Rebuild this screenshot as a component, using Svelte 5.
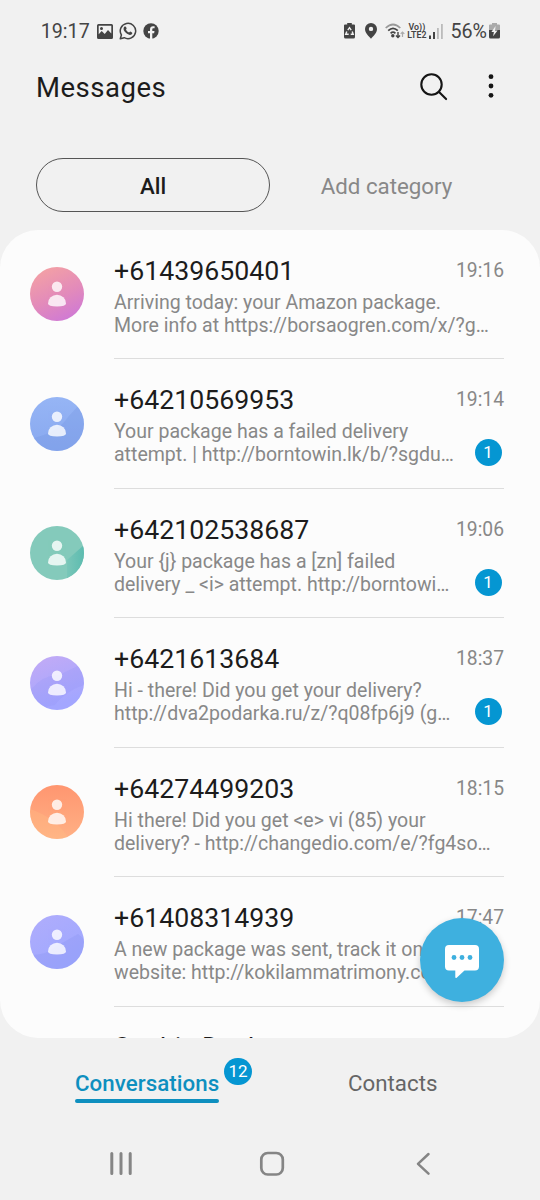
<script>
  const rows = [
    { name: '+61439650401', time: '19:16', lines: ['Arriving today: your Amazon package.', 'More info at https://borsaogren.com/x/?g…'], tone: 'pink' },
    { name: '+64210569953', time: '19:14', lines: ['Your package has a failed delivery', 'attempt. | http://borntowin.lk/b/?sgdu…'], tone: 'blue', unread: 1 },
    { name: '+642102538687', time: '19:06', lines: ['Your {j} package has a [zn] failed', 'delivery _ <i> attempt. http://borntowi…'], tone: 'green', unread: 1 },
    { name: '+6421613684', time: '18:37', lines: ['Hi - there! Did you get your delivery?', 'http://dva2podarka.ru/z/?q08fp6j9 (g…'], tone: 'violet', unread: 1 },
    { name: '+64274499203', time: '18:15', lines: ['Hi there! Did you get <e> vi (85) your', 'delivery? - http://changedio.com/e/?fg4so…'], tone: 'orange' },
    { name: '+61408314939', time: '17:47', lines: ['A new package was sent, track it on our', 'website: http://kokilammatrimony.com/…'], tone: 'indigo' }
  ];
</script>

<div class="phone">
  <header class="status">
    <div class="left">
      <span>19:17</span>
      <svg class="pic" width="16" height="15" viewBox="0 0 16 15"><path fill="#444" fill-rule="evenodd" d="M1.5 0h13A1.5 1.5 0 0 1 16 1.500v12a1.500 1.500 0 0 1-1.500 1.500h-13A1.500 1.500 0 0 1 0 13.500v-12A1.500 1.500 0 0 1 1.500 0ZM1.700 1.800v8.400l3-3.200 3 3 3.300-4 3.300 3.500V1.800ZM4.500 3a1.500 1.500 0 1 1 0 3a1.500 1.500 0 0 1 0-3Z"/></svg>
      <svg class="wa" width="18" height="18" viewBox="0 0 18 18"><path d="M1.300 16.800 2.400 13A7.700 7.700 0 1 1 5.200 15.700Z" fill="none" stroke="#444" stroke-width="1.500" stroke-linejoin="round"/><path d="M5.700 4.600c.6-.4 1.100-.2 1.400.5l.5 1.300c.1.500-.6 1-.6 1.300.7 1.300 1.700 2.200 3 2.700.4.100.9-.9 1.400-.8l1.600.8c.7.500 0 1.800-.6 2.200-1.400.9-3.600 0-5.300-1.500C5.300 9.500 4 7.200 4.700 5.700c.2-.5.600-.9 1-1.100Z" fill="#444"/></svg>
      <svg class="fb" width="16" height="16" viewBox="0 0 16 16"><circle cx="8" cy="8" r="7.700" fill="#444"/><path d="M7 16v-5.700H5V8h2V6.400C7 4.200 8.200 3.200 10 3.200l1.600.1v2h-1c-1 0-1.300.5-1.300 1.200V8h2.200l-.4 2.300H9.300V16Z" fill="#f1f1f1"/></svg>
    </div>
    <div class="right">
      <svg class="recycle" width="11" height="16" viewBox="0 0 11 16"><path d="M3.200 0h4.600v1.600H10q1 0 1 1V14q0 1.500-1.500 1.500h-8Q0 15.500 0 14V2.600q0-1 1-1h2.200Z" fill="#444"/><path d="m3.800 7.200 1.700-2.500 1.700 2.500M8.200 8.500l1 2.800H6.700M4.700 11.300h-3l1.100-2.800" fill="none" stroke="#f1f1f1" stroke-width="1.400"/></svg>
      <svg class="pin" width="12" height="16" viewBox="0 0 12 16"><path fill="#444" fill-rule="evenodd" d="M6 0a6 6 0 0 1 6 6c0 4-4 7.500-6 9.700C4 13.500 0 10 0 6a6 6 0 0 1 6-6Zm0 3.700a2.200 2.200 0 1 0 0 4.400 2.200 2.200 0 0 0 0-4.400Z"/></svg>
      <svg class="wifi" width="20" height="16" viewBox="0 0 20 16"><g fill="none" stroke-width="1.700"><path d="M.7 5Q8 -2 15.300 5" stroke="#999"/><path d="M3.200 7.700Q8 3 12.800 7.700M5.600 10.300Q8 8 10.400 10.300" stroke="#444"/></g><circle cx="7.800" cy="12.800" r="1.700" fill="#444"/><path d="M13 9v5.500m-2-2 2 2 2-2" fill="none" stroke="#444" stroke-width="1.400"/><path d="M17.500 14V9m-1.800 1.900L17.500 9l1.800 1.900" fill="none" stroke="#aaa" stroke-width="1.200"/></svg>
      <span class="lte"><b>Vo))</b><b>LTE2</b></span>
      <svg class="signal" width="14" height="15" viewBox="0 0 14 15"><path d="M0 11.500h2V15H0ZM4 8h2v7H4Z" fill="#444"/><path d="M8 4h1.800v11H8ZM12 0h1.800v15H12Z" fill="#bbb"/></svg>
      <span class="pct">56%</span>
      <svg class="batt" width="11" height="16" viewBox="0 0 11 16"><path d="M3 0h5v1.600h2q1 0 1 1V8H0V2.600q0-1 1-1h2Z" fill="#aaa"/><path d="M0 7h11v7q0 1.500-1.500 1.500h-8Q0 15.500 0 14Z" fill="#444"/><path d="M6.600 3 2.400 9h2.500l-.8 4.300L8.600 7.500H6Z" fill="#f1f1f1"/></svg>
    </div>
  </header>

  <div class="bar">
    <h1>Messages</h1>
    <svg class="search" width="28" height="28" viewBox="0 0 28 28" fill="none" stroke="#151515" stroke-width="2.100" stroke-linecap="round"><circle cx="11.500" cy="11.500" r="10.200"/><path d="m18.800 18.800 7.300 7.300"/></svg>
    <svg class="more" width="6" height="24" viewBox="0 0 6 24" fill="#151515"><circle cx="3" cy="2.700" r="2.400"/><circle cx="3" cy="12" r="2.400"/><circle cx="3" cy="21.300" r="2.400"/></svg>
  </div>

  <div class="cats">
    <button class="all">All</button>
    <button class="add">Add category</button>
  </div>

  <main>
    {#each rows as row}
      <article>
        <div class="avatar {row.tone}">
          <svg width="54" height="54" viewBox="0 0 54 54">
            {#if row.tone === 'blue'}<path d="M38 20 49 8 54 22V54H0V42Q28 36 38 20Z" fill="#7595e0" opacity=".3"/>
            {:else if row.tone === 'green'}<path d="M37 54V34L54 19V54Z" fill="url(#teal)"/><defs><linearGradient id="teal"><stop stop-color="#79c6b8"/><stop offset="1" stop-color="#5dbcb0"/></linearGradient></defs>
            {:else if row.tone === 'violet'}<path d="M0 34Q14 18 29 19L54 7V29Q36 35 25 49L0 54Z" fill="#8d91f5" opacity=".2"/>
            {:else if row.tone === 'orange'}<path d="M0 24Q27 33 39 54H0Z" fill="#ffc184" opacity=".3"/>
            {:else if row.tone === 'indigo'}<path d="M23 54Q31 39 54 34V54ZM0 40Q17 40 25 32L48 19 54 24V54H0Z" fill="#838fee" opacity=".25"/>{/if}
            <g fill="#fff" opacity=".8"><circle cx="27" cy="19.800" r="5.200"/><path d="M18 36.500a9 8.700 0 0 1 18 0q0 2.900-9 2.900t-9-2.900Z"/></g>
          </svg>
        </div>
        <div class="body">
          <div class="top"><h2>{row.name}</h2><time>{row.time}</time></div>
          <p>{row.lines[0]}</p>
          <p>{row.lines[1]}</p>
          {#if row.unread}<span class="badge">{row.unread}</span>{/if}
        </div>
      </article>
    {/each}
    <article class="peek">
      <div class="avatar pink"></div>
      <div class="body"><div class="top"><h2>Sophie Dachsent</h2></div></div>
    </article>
  </main>

  <button class="fab" aria-label="New message">
    <svg width="34" height="34" viewBox="0 0 34 34"><path d="M4 0h26q4 0 4 4v17.500q0 4-4 4H19.500l-7.800 7.200q-1.400.8-1.400-.8v-6.400H4q-4 0-4-4V4q0-4 4-4Z" fill="#fff"/><g fill="#3eb0df"><circle cx="9" cy="12.500" r="2.400"/><circle cx="17" cy="12.500" r="2.400"/><circle cx="25" cy="12.500" r="2.400"/></g></svg>
  </button>

  <nav class="tabs">
    <div class="active"><span>Conversations</span><i>12</i></div>
    <div class="contacts">Contacts</div>
  </nav>

  <footer>
    <svg width="540" height="40" viewBox="0 0 540 40" fill="none" stroke="#858585" stroke-linecap="round" stroke-linejoin="round"><path d="M111.800 9.500v20M121 9.500v20M130.200 9.500v20" stroke-width="3"/><rect x="261.300" y="9" width="21.500" height="21.500" rx="6.500" stroke-width="2.700"/><path d="m428.500 10-10.500 9.800 10.500 9.800" stroke-width="2.500"/></svg>
  </footer>
</div>

<style>
  :global(body) { margin: 0; background: #f1f1f1; }
  * { box-sizing: border-box; }
  .phone { position: relative; width: 540px; height: 1200px; overflow: hidden; background: #f1f1f1; font-family: Roboto, sans-serif; color: #1c1c1c; display: flex; flex-direction: column; }
  button { border: 0; background: none; padding: 0; font: inherit; }
  h1, h2, p { margin: 0; font-weight: 400; white-space: nowrap; }
  svg { display: block; flex: none; }
  .status { height: 62px; display: flex; justify-content: space-between; padding: 0 40px; color: #444; font-size: 19.700px; line-height: 62px; }
  .left, .right { display: flex; align-items: center; }
  .left > span { padding: 2px 0 0 .7px; }
  .left .pic { margin-left: 7px; }
  .left .wa { margin-left: 6px; }
  .left .fb { margin-left: 6px; }
  .pin { margin-left: 10px; }
  .wifi { margin-left: 8px; }
  .lte { display: flex; flex-direction: column; align-items: center; width: 21px; margin-left: 1px; font-size: 8.800px; line-height: 8.500px; }
  .lte b { font-weight: 600; }
  .signal { margin-left: 2px; }
  .pct { margin-left: 7px; padding-top: 2px; }
  .batt { margin-left: 2px; }
  .bar { height: 50px; display: flex; align-items: center; padding-left: 36px; }
  h1 { width: 384px; font-size: 27.500px; letter-spacing: .5px; padding-top: 1px; }
  .search { margin-top: -1px; }
  .more { margin-left: 40px; margin-top: -2px; }
  .cats { height: 118px; padding: 46px 36px 18px; display: flex; font-size: 22.300px; }
  .all { width: 234px; border: 1.500px solid #555; border-radius: 27px; color: #1c1c1c; font-weight: 500; padding-top: 1px; }
  .add { width: 234px; color: #888; padding-right: 1px; padding-top: 1px; }
  main { height: 808px; background: #fcfcfc; border-radius: 38px; overflow: hidden; flex: none; padding-top: .2px; }
  article { height: 129.500px; padding: 0 36px 0 30px; display: flex; }
  .avatar { width: 54px; height: 54px; border-radius: 50%; margin: 37px 30px 0 0; overflow: hidden; flex: none; }
  .pink { background: linear-gradient(155deg, #f3a0a5 10%, #e28abb 55%, #cf79d5 90%); }
  .blue { background: linear-gradient(#96b5f5, #88a8ef); }
  .green { background: #84cabb; }
  .violet { background: linear-gradient(160deg, #c4abf5, #a3a6ff 80%); }
  .orange { background: linear-gradient(#ff9670, #ffb185); }
  .indigo { background: linear-gradient(150deg, #b0adfc, #9ca7ff); }
  .body { position: relative; width: 390px; height: 129px; flex: none; border-bottom: 1.500px solid #ddd; }
  .top { height: 60.500px; padding-top: 24.500px; display: flex; justify-content: space-between; }
  .peek .top { padding-top: 23.500px; }
  h2 { font-size: 26.700px; line-height: 32px; }
  time { font-size: 19.300px; line-height: 32px; color: #888; }
  p { font-size: 19.530px; line-height: 23px; color: #888; position: relative; top: .1px; }
  .badge { position: absolute; right: 2.500px; top: 79.500px; width: 27px; height: 27px; border-radius: 50%; background: #0596d2; color: #fff; font-size: 17px; line-height: 27px; text-align: center; }
  .fab { position: absolute; left: 420px; top: 918px; width: 84px; height: 84px; border-radius: 50%; background: #3eb0df; box-shadow: 0 3px 7px #0003; display: flex; justify-content: center; padding-top: 27px; }
  .tabs { height: 89px; display: flex; font-size: 22.300px; line-height: 27px; padding: 32px 0 0 75px; flex: none; }
  .active { position: relative; width: 144px; height: 32px; color: #0e8fbf; font-weight: 500; white-space: nowrap; letter-spacing: .05px; }
  .active::after { content: ''; display: block; height: 3.500px; margin-top: 2px; border-radius: 2px; background: #0e8fbf; }
  .active i { position: absolute; left: 149px; top: -12px; width: 28px; height: 27px; border-radius: 14px; background: #0596d2; color: #fff; font: 400 17px/27px Roboto, sans-serif; text-align: center; }
  .contacts { margin-left: 129px; color: #666; }
  footer { padding-top: 17px; }
</style>
